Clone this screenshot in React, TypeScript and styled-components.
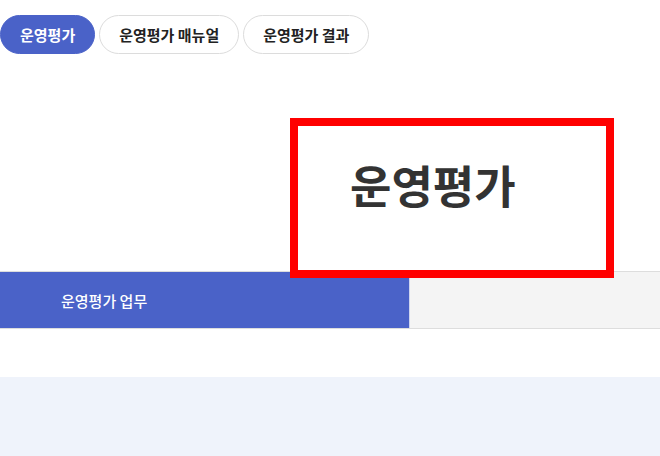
import React from "react";
import styled, { createGlobalStyle } from "styled-components";

const GlobalStyle = createGlobalStyle`
  html, body {
    margin: 0;
    padding: 0;
    background: #ffffff;
  }
  body {
    font-family: "Noto Sans CJK KR", "Noto Sans", sans-serif;
    color: #222222;
  }
  * { box-sizing: border-box; }
`;

const Page = styled.div`
  position: relative;
  width: 660px;
  height: 456px;
  display: flex;
  flex-direction: column;
  overflow: hidden;
`;

const PillNav = styled.nav`
  display: flex;
  gap: 4px;
  padding-top: 15px;
`;

const Pill = styled.button<{ $active?: boolean }>`
  height: 39px;
  padding: 0 19px;
  border-radius: 20px;
  border: 1px solid ${(p) => (p.$active ? "#4a62c8" : "#dcdcdc")};
  background: ${(p) => (p.$active ? "#4a62c8" : "#ffffff")};
  color: ${(p) => (p.$active ? "#ffffff" : "#222222")};
  font-family: inherit;
  font-size: 15px;
  font-weight: 700;
  line-height: 1;
  cursor: pointer;
  white-space: nowrap;
`;

const TitleArea = styled.div`
  height: 217px;
  padding: 108px 0 0 350px;
`;

const Title = styled.h1`
  margin: 0;
  font-size: 45px;
  font-weight: 700;
  line-height: 1;
  color: #333333;
`;

const TabBar = styled.div`
  display: flex;
  height: 58px;
  border-top: 1px solid #dddddd;
  border-bottom: 1px solid #dddddd;
`;

const Tab = styled.div<{ $active?: boolean }>`
  display: flex;
  align-items: center;
  flex: ${(p) => (p.$active ? "0 0 409px" : "1 1 auto")};
  padding-left: 61px;
  background: ${(p) => (p.$active ? "#4a62c8" : "#f4f4f4")};
  border-left: ${(p) => (p.$active ? "none" : "1px solid #cfd5ef")};
  color: #ffffff;
  font-size: 15px;
  font-weight: 500;
`;

const Spacer = styled.div`
  flex: 0 0 48px;
`;

const ContentArea = styled.section`
  flex: 1 1 auto;
  background: #eff3fb;
`;

const Highlight = styled.div`
  position: absolute;
  left: 290px;
  top: 118px;
  width: 324px;
  height: 160px;
  border: 8px solid #ff0000;
  pointer-events: none;
`;

export default function App() {
  return (
    <>
      <GlobalStyle />
      <Page>
        <PillNav>
          <Pill $active>운영평가</Pill>
          <Pill>운영평가 매뉴얼</Pill>
          <Pill>운영평가 결과</Pill>
        </PillNav>
        <TitleArea>
          <Title>운영평가</Title>
        </TitleArea>
        <TabBar>
          <Tab $active>운영평가 업무</Tab>
          <Tab />
        </TabBar>
        <Spacer />
        <ContentArea />
        <Highlight />
      </Page>
    </>
  );
}
